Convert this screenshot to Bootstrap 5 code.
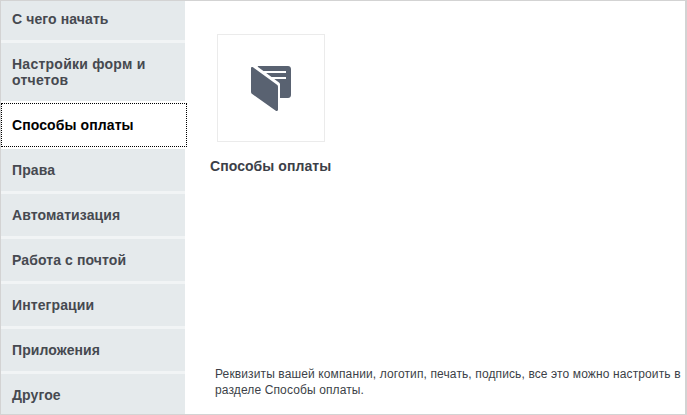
<!DOCTYPE html>
<html lang="ru">
<head>
<meta charset="utf-8">
<title>Способы оплаты</title>
<link href="https://cdn.jsdelivr.net/npm/bootstrap@5.3.0/dist/css/bootstrap.min.css" rel="stylesheet">
<style>
html,body{height:100%;margin:0;background:#fff}
body{font-family:"Liberation Sans",Arial,sans-serif;color:#3c3f48}
.shell{height:415px;width:687px;border:1px solid #d3d3d3;border-bottom-width:1px;border-right-width:2px;overflow:hidden}
.side{width:184px;flex:none;gap:3px;background:#f1f4f5;height:100%}
.side-link{display:flex;align-items:center;height:42px;padding:0 11px;background:#e5eaec;color:#464950;font-size:14px;font-weight:700;line-height:16px;letter-spacing:.1px;text-decoration:none;flex:none}
.side-link.first{height:39px;padding-bottom:3px}
.side-link.two{height:58px;letter-spacing:.25px}
.side-link.on{background:#fff;color:#000;outline:1px dotted #000;outline-offset:-1px;box-shadow:0 -2px #fff,0 2px #fff;height:44px;width:186px;margin-top:-1px;margin-bottom:-1px;position:relative}
.pane{min-width:0}
.tile{margin:33px 0 0 32px;width:108px}
.tile-box{width:108px;height:108px;border:1px solid #ebebeb}
.tile-name{font-size:14px;font-weight:700;margin:16px 0 0 -7px;line-height:16px;letter-spacing:.07px;white-space:nowrap;color:#3c3f48}
.hint{font-size:12px;line-height:16px;letter-spacing:.12px;margin:0 0 16px 30px;color:#3c3f48;width:480px}
</style>
</head>
<body>
<div class="shell d-flex">
  <nav class="side d-flex flex-column">
    <a class="side-link first" href="#">С чего начать</a>
    <a class="side-link two" href="#">Настройки форм и отчетов</a>
    <a class="side-link on" href="#">Способы оплаты</a>
    <a class="side-link" href="#">Права</a>
    <a class="side-link" href="#">Автоматизация</a>
    <a class="side-link" href="#">Работа с почтой</a>
    <a class="side-link" href="#">Интеграции</a>
    <a class="side-link" href="#">Приложения</a>
    <a class="side-link" href="#">Другое</a>
  </nav>
  <main class="pane flex-grow-1 d-flex flex-column justify-content-between">
    <div class="tile">
      <div class="tile-box d-flex align-items-center justify-content-center">
        <svg width="40" height="45" viewBox="0 0 40 45" aria-hidden="true">
          <path fill="#596271" d="M2 1.200 26 18.800c.7.500 1 1.100 1 2V43.500c0 1.300-1 1.900-2.200 1.200L1.200 28C.4 27.400 0 26.800 0 25.900V2.200C0 1 1 .5 2 1.200Z"/>
          <path fill="#596271" d="M7.500 0H37c1.700 0 3 1.300 3 3v26c0 1.700-1.300 3-3 3H29V18.500c0-.8-.4-1.500-1-1.900L7 1C6.500.6 6.800 0 7.500 0Z"/>
          <path fill="none" stroke="#fff" stroke-width="2.200" d="M10 6H35M18 12H35"/>
        </svg>
      </div>
      <div class="tile-name">Способы оплаты</div>
    </div>
    <p class="hint">Реквизиты вашей компании, логотип, печать, подпись, все это можно настроить в разделе Способы оплаты.</p>
  </main>
</div>
<script src="https://cdn.jsdelivr.net/npm/bootstrap@5.3.0/dist/js/bootstrap.bundle.min.js"></script>
</body>
</html>
